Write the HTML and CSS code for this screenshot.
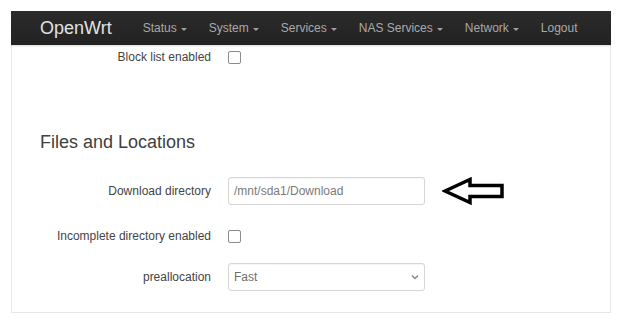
FILE: index.html
```html
<!DOCTYPE html>
<html>
<head>
<meta charset="utf-8">
<link rel="stylesheet" href="styles.css">
</head>
<body>
<header class="navbar">
  <span class="brand">OpenWrt</span>
  <nav class="menu">
    <a class="item">Status<span class="caret"></span></a>
    <a class="item">System<span class="caret"></span></a>
    <a class="item">Services<span class="caret"></span></a>
    <a class="item">NAS Services<span class="caret"></span></a>
    <a class="item">Network<span class="caret"></span></a>
    <a class="item">Logout</a>
  </nav>
</header>
<main class="panel">
  <div class="row row-check first">
    <label class="label">Block list enabled</label>
    <input type="checkbox" class="check">
  </div>
  <h2 class="heading">Files and Locations</h2>
  <div class="row row-field download">
    <label class="label">Download directory</label>
    <div class="field">/mnt/sda1/Download</div>
    <svg class="arrow" width="63" height="28" viewBox="0 0 63 28">
      <polygon points="3,14 28,2.5 28,8.5 60,8.5 60,19.5 28,19.5 28,25.5" fill="#fff" stroke="#000" stroke-width="3.5" stroke-linejoin="miter"/>
    </svg>
  </div>
  <div class="row row-check incomplete">
    <label class="label">Incomplete directory enabled</label>
    <input type="checkbox" class="check">
  </div>
  <div class="row row-field prealloc">
    <label class="label">preallocation</label>
    <div class="field select">
      <span>Fast</span>
      <svg class="chev" width="8" height="6" viewBox="0 0 8 6"><path d="M1 1.5 L4 4.5 L7 1.5" fill="none" stroke="#888" stroke-width="1.5"/></svg>
    </div>
  </div>
</main>
</body>
</html>
```
FILE: styles.css
```css
* { box-sizing: border-box; }
html, body { background: #fff; }
body {
  margin: 11px 6px 0 11px;
  font-family: "Liberation Sans", Arial, sans-serif;
  color: #404040;
}
.navbar {
  height: 34px;
  background: linear-gradient(#2b2b2b, #222);
  display: flex;
  align-items: center;
  padding-left: 29px;
  box-shadow: 0 1px 2px rgba(0,0,0,0.15);
  position: relative;
}
.brand {
  font-size: 18px;
  color: #e2e2e2;
  line-height: 20px;
  margin-top: -1px;
}
.menu {
  display: flex;
  align-items: center;
  gap: 22px;
  margin-left: 31px;
}
.item {
  font-size: 12px;
  color: #a9a9a9;
  display: flex;
  align-items: center;
  line-height: 14px;
}
.caret {
  display: inline-block;
  width: 0;
  height: 0;
  border-left: 3.5px solid transparent;
  border-right: 3.5px solid transparent;
  border-top: 3.5px solid #a0a0a0;
  margin-left: 4px;
  margin-top: 2px;
}
.panel {
  border: 1px solid #e6e6e6;
  border-top: none;
  padding-bottom: 21px;
}
.row {
  display: flex;
  align-items: center;
}
.label {
  width: 199px;
  text-align: right;
  font-size: 12px;
  color: #444;
  margin-right: 17px;
  flex: none;
}
.row-check { height: 24px; }
.row-field { height: 28px; }
.first { margin-top: 0; }
.heading {
  margin: 63px 0 0 28px;
  font-size: 18px;
  font-weight: normal;
  line-height: 20px;
  color: #404040;
}
.download { margin-top: 25px; }
.incomplete { margin-top: 19px; }
.prealloc { margin-top: 15px; }
.check {
  appearance: none;
  -webkit-appearance: none;
  width: 13px;
  height: 13px;
  margin: 0;
  border: 1px solid #8c8c8c;
  border-radius: 2px;
  background: #fff;
}
.field {
  width: 197px;
  height: 28px;
  border: 1px solid #d6d6d6;
  border-radius: 3px;
  font-size: 12px;
  color: #7a7a7a;
  padding: 0 5px;
  display: flex;
  align-items: center;
  box-shadow: inset 0 1px 1px rgba(0,0,0,0.04);
}
.select {
  justify-content: space-between;
  padding-right: 5px;
  color: #6e6e6e;
}
.chev { display: block; }
.arrow {
  margin-left: 17px;
  display: block;
}
```
